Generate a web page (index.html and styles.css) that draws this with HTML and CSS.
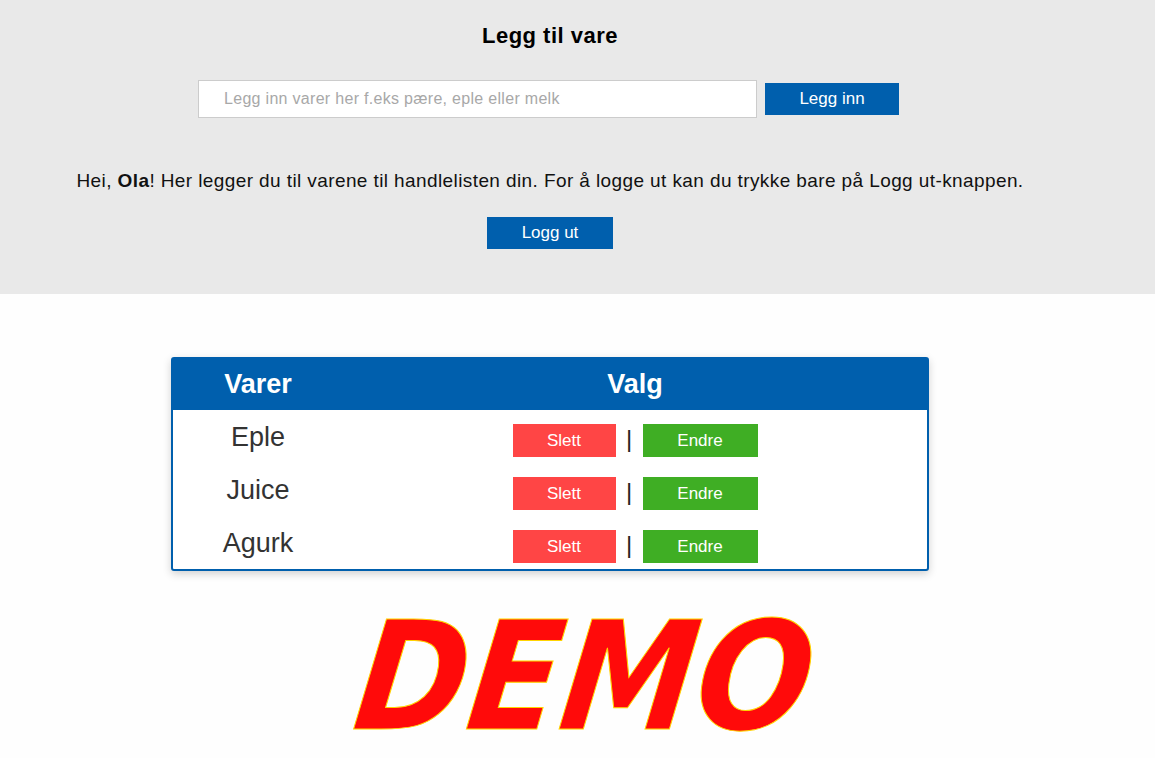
FILE: index.html
```html
<!DOCTYPE html>
<html lang="no">
<head>
<meta charset="utf-8">
<title>Handleliste</title>
<link rel="stylesheet" href="styles.css">
</head>
<body>
<header class="top">
  <div class="wrap">
    <h2 class="title">Legg til vare</h2>
    <form class="add-form">
      <input class="add-input" type="text" placeholder="Legg inn varer her f.eks pære, eple eller melk">
      <button class="btn btn-blue btn-add" type="button">Legg inn</button>
    </form>
    <p class="intro">Hei, <b>Ola</b>! Her legger du til varene til handlelisten din. For å logge ut kan du trykke bare på Logg ut-knappen.</p>
    <div class="logout-row">
      <button class="btn btn-blue btn-logout" type="button">Logg ut</button>
    </div>
  </div>
</header>
<main class="wrap content">
  <div class="card">
    <table class="list">
      <thead>
        <tr><th class="col-item">Varer</th><th class="col-opt">Valg</th></tr>
      </thead>
      <tbody>
        <tr>
          <td class="item">Eple</td>
          <td class="opts"><span class="btn btn-red">Slett</span><span class="sep">|</span><span class="btn btn-green">Endre</span></td>
        </tr>
        <tr>
          <td class="item">Juice</td>
          <td class="opts"><span class="btn btn-red">Slett</span><span class="sep">|</span><span class="btn btn-green">Endre</span></td>
        </tr>
        <tr>
          <td class="item">Agurk</td>
          <td class="opts"><span class="btn btn-red">Slett</span><span class="sep">|</span><span class="btn btn-green">Endre</span></td>
        </tr>
      </tbody>
    </table>
  </div>
</main>
<div class="demo"><span class="demo-text">DEMO</span></div>
</body>
</html>
```

FILE: styles.css
```css
html, body {
  margin: 0;
  padding: 0;
}
body {
  background: #fefefe;
  font-family: "Liberation Sans", Arial, sans-serif;
  color: #111;
  width: 1155px;
}
.wrap {
  width: 1100px;
}
.top {
  background: #e9e9e9;
  height: 294px;
}
.top .wrap {
  padding-top: 23px;
  display: flex;
  flex-direction: column;
  align-items: center;
}
.title {
  margin: 0;
  font-size: 22px;
  letter-spacing: 0.5px;
  line-height: 26px;
  font-weight: bold;
  color: #000;
}
.add-form {
  margin-top: 31px;
  padding-right: 3px;
  display: flex;
  align-items: center;
  gap: 8px;
}
.add-input {
  width: 559px;
  height: 38px;
  box-sizing: border-box;
  border: 1px solid #cccccc;
  background: #fff;
  padding: 0 0 0 25px;
  font-family: "Liberation Sans", Arial, sans-serif;
  font-size: 16px;
  letter-spacing: 0.3px;
  outline: none;
}
.add-input::placeholder {
  color: #a8a8a8;
}
.btn {
  display: inline-flex;
  align-items: center;
  justify-content: center;
  border: none;
  color: #fff;
  font-family: "Liberation Sans", Arial, sans-serif;
  font-size: 17px;
  box-sizing: border-box;
  padding: 0;
}
.btn-blue {
  background: #005fad;
}
.btn-add {
  width: 134px;
  height: 32px;
}
.intro {
  margin: 52px 0 0;
  font-size: 19px;
  letter-spacing: 0.4px;
  line-height: 22px;
  color: #111;
}
.logout-row {
  margin-top: 25px;
}
.btn-logout {
  width: 126px;
  height: 32px;
}
.content {
  padding-top: 63px;
  display: flex;
  justify-content: center;
}
.card {
  width: 758px;
  box-sizing: border-box;
  border: 2px solid #005fad;
  border-radius: 3px;
  box-shadow: 0 3px 8px rgba(0,0,0,0.18);
  background: #fff;
}
.list {
  width: 100%;
  border-collapse: collapse;
}
.list th {
  background: #005fad;
  color: #fff;
  font-size: 27px;
  font-weight: bold;
  height: 51px;
  padding: 0;
}
.col-item {
  width: 170px;
}
.list td {
  padding: 0;
  height: 53px;
  box-sizing: border-box;
  vertical-align: top;
}
.item {
  text-align: center;
  font-size: 27px;
  color: #333;
  line-height: 30px;
}
.list td.item {
  padding-top: 12px;
}
.opts {
  text-align: center;
}
.list td.opts {
  padding-top: 14px;
}
.opts .btn {
  height: 33px;
  font-size: 17px;
  vertical-align: top;
}
.btn-red {
  background: #ff4545;
  width: 103px;
}
.btn-green {
  background: #3fae24;
  width: 115px;
}
.sep {
  display: inline-block;
  width: 27px;
  text-align: center;
  font-size: 24px;
  color: #222;
  vertical-align: top;
  line-height: 30px;
}
.demo {
  text-align: center;
  width: 1100px;
  margin-top: 27px;
  padding-left: 70px;
  box-sizing: border-box;
  font-family: "DejaVu Sans", sans-serif;
  font-stretch: condensed;
  font-weight: bold;
  font-style: italic;
  font-size: 151px;
  line-height: 159px;
  color: #ff0a0a;
}
.demo-text {
  display: inline-block;
  transform: skewX(-7deg);
  -webkit-text-stroke: 1px #ffd400;
}
```
